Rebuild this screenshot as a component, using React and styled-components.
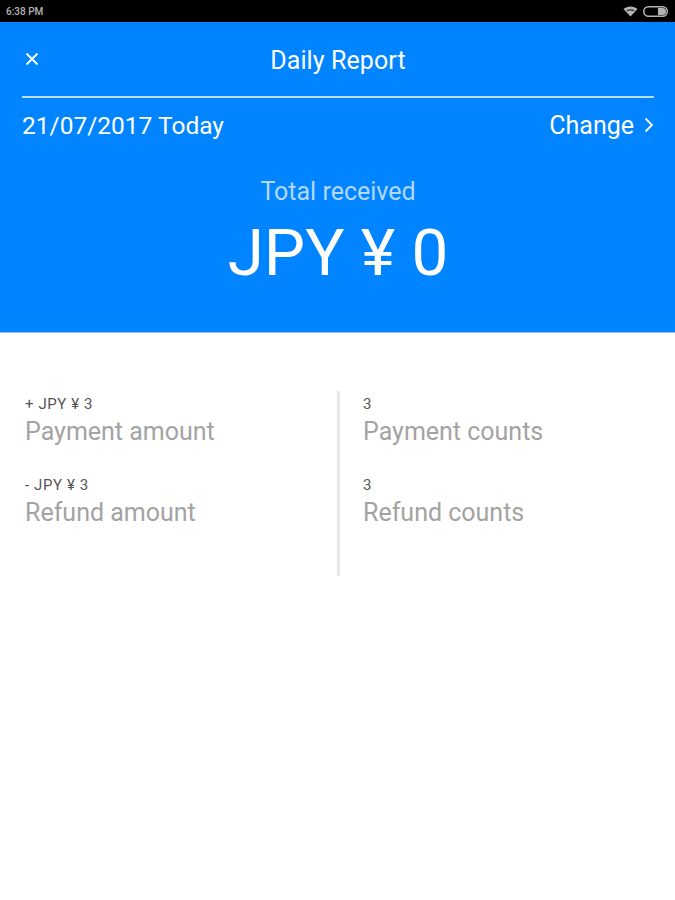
import React from "react";
import styled, { createGlobalStyle } from "styled-components";

const GlobalStyle = createGlobalStyle`
  html, body {
    margin: 0;
    padding: 0;
    background: #fff;
    font-family: Roboto, "Liberation Sans", sans-serif;
  }
`;

const Page = styled.div`
  width: 675px;
  height: 900px;
  overflow: hidden;
  background: #fff;
  display: flex;
  flex-direction: column;
`;

const StatusBar = styled.div`
  height: 22px;
  background: #000;
  display: flex;
  align-items: center;
  justify-content: space-between;
  padding: 0 7px 0 6px;
  color: #b4b4b4;
  font-size: 10px;
  font-weight: 500;
`;

const StatusIcons = styled.div`
  display: flex;
  align-items: center;
  gap: 5px;
`;

const Header = styled.div`
  height: 311px;
  background: #0084ff;
  color: #fff;
  padding: 0 21px 0 22px;
  display: flex;
  flex-direction: column;
  border-bottom: 1px solid #8fc4fb;
  box-sizing: border-box;
`;

const TitleRow = styled.div`
  height: 76px;
  flex: none;
  display: flex;
  align-items: center;
  justify-content: center;
  position: relative;
  padding-top: 2px;
  font-size: 25px;
  letter-spacing: 0.1px;
  border-bottom: 2px solid #b9dcff;
  box-sizing: border-box;
`;

const CloseButton = styled.svg`
  position: absolute;
  left: 3px;
  top: 30px;
`;

const DateRow = styled.div`
  display: flex;
  justify-content: space-between;
  align-items: center;
  height: 54px;
  font-size: 24.5px;
`;

const ChangeLink = styled.div`
  display: flex;
  align-items: center;
  gap: 10px;
  font-size: 25px;
`;

const TotalLabel = styled.div`
  margin-top: 26px;
  text-align: center;
  font-size: 25px;
  line-height: 28px;
  color: #b3d8fd;
`;

const TotalValue = styled.div`
  margin-top: 9px;
  text-align: center;
  font-size: 65.5px;
  line-height: 75px;
`;

const Stats = styled.div`
  margin-top: 58px;
  display: grid;
  grid-template-columns: 337px 1fr;
  height: 185px;
`;

const Column = styled.div`
  padding: 5px 0 0 ${(p) => p.$inset}px;
  display: flex;
  flex-direction: column;
  gap: 31px;
  ${(p) => p.$divided && "border-left: 3px solid #e8e8e8; box-sizing: border-box;"}
`;

const Stat = styled.div`
  display: flex;
  flex-direction: column;
`;

const StatValue = styled.div`
  font-size: 15px;
  line-height: 16px;
  letter-spacing: 0.6px;
  color: #555;
`;

const StatLabel = styled.div`
  margin-top: 6px;
  font-size: 25px;
  line-height: 28px;
  color: #a3a3a3;
`;

const left = [
  { value: "+ JPY ¥ 3", label: "Payment amount" },
  { value: "- JPY ¥ 3", label: "Refund amount" },
];

const right = [
  { value: "3", label: "Payment counts" },
  { value: "3", label: "Refund counts" },
];

const App = () => {
  return (
    <Page>
      <GlobalStyle />
      <StatusBar>
        <span>6:38 PM</span>
        <StatusIcons>
          <svg width="15" height="11" viewBox="0 0 15 11">
            <path d="M0.5 3 C4 -0.5 11 -0.5 14.5 3 L7.5 10.5 Z" fill="#b4b4b4" />
            <path d="M3.5 4.2 C6 2.8 9 2.8 11.5 4.2 L10.6 5.2 C8.5 4.2 6.5 4.2 4.4 5.2 Z" fill="#333" />
          </svg>
          <svg width="25" height="11" viewBox="0 0 25 11">
            <rect x="0.75" y="0.75" width="23.5" height="9.5" rx="4.75" fill="none" stroke="#b4b4b4" strokeWidth="1.5" />
            <path d="M15 2 H19.5 A3.5 3.5 0 0 1 19.5 9 H15 Z" fill="#b4b4b4" />
          </svg>
        </StatusIcons>
      </StatusBar>
      <Header>
        <TitleRow>
          <CloseButton width="14" height="14" viewBox="0 0 14 14">
            <path d="M1.5 1.5 L12.5 12.5 M12.5 1.5 L1.5 12.5" stroke="#fff" strokeWidth="1.8" fill="none" />
          </CloseButton>
          Daily Report
        </TitleRow>
        <DateRow>
          <span>21/07/2017 Today</span>
          <ChangeLink>
            Change
            <svg width="10" height="16" viewBox="0 0 10 16">
              <path d="M1.5 1.5 L8 8 L1.5 14.5" stroke="#fff" strokeWidth="1.8" fill="none" />
            </svg>
          </ChangeLink>
        </DateRow>
        <TotalLabel>Total received</TotalLabel>
        <TotalValue>JPY ¥ 0</TotalValue>
      </Header>
      <Stats>
        <Column $inset={25}>
          {left.map((s) => (
            <Stat key={s.label}>
              <StatValue>{s.value}</StatValue>
              <StatLabel>{s.label}</StatLabel>
            </Stat>
          ))}
        </Column>
        <Column $inset={23} $divided>
          {right.map((s) => (
            <Stat key={s.label}>
              <StatValue>{s.value}</StatValue>
              <StatLabel>{s.label}</StatLabel>
            </Stat>
          ))}
        </Column>
      </Stats>
    </Page>
  );
};

export default App;
